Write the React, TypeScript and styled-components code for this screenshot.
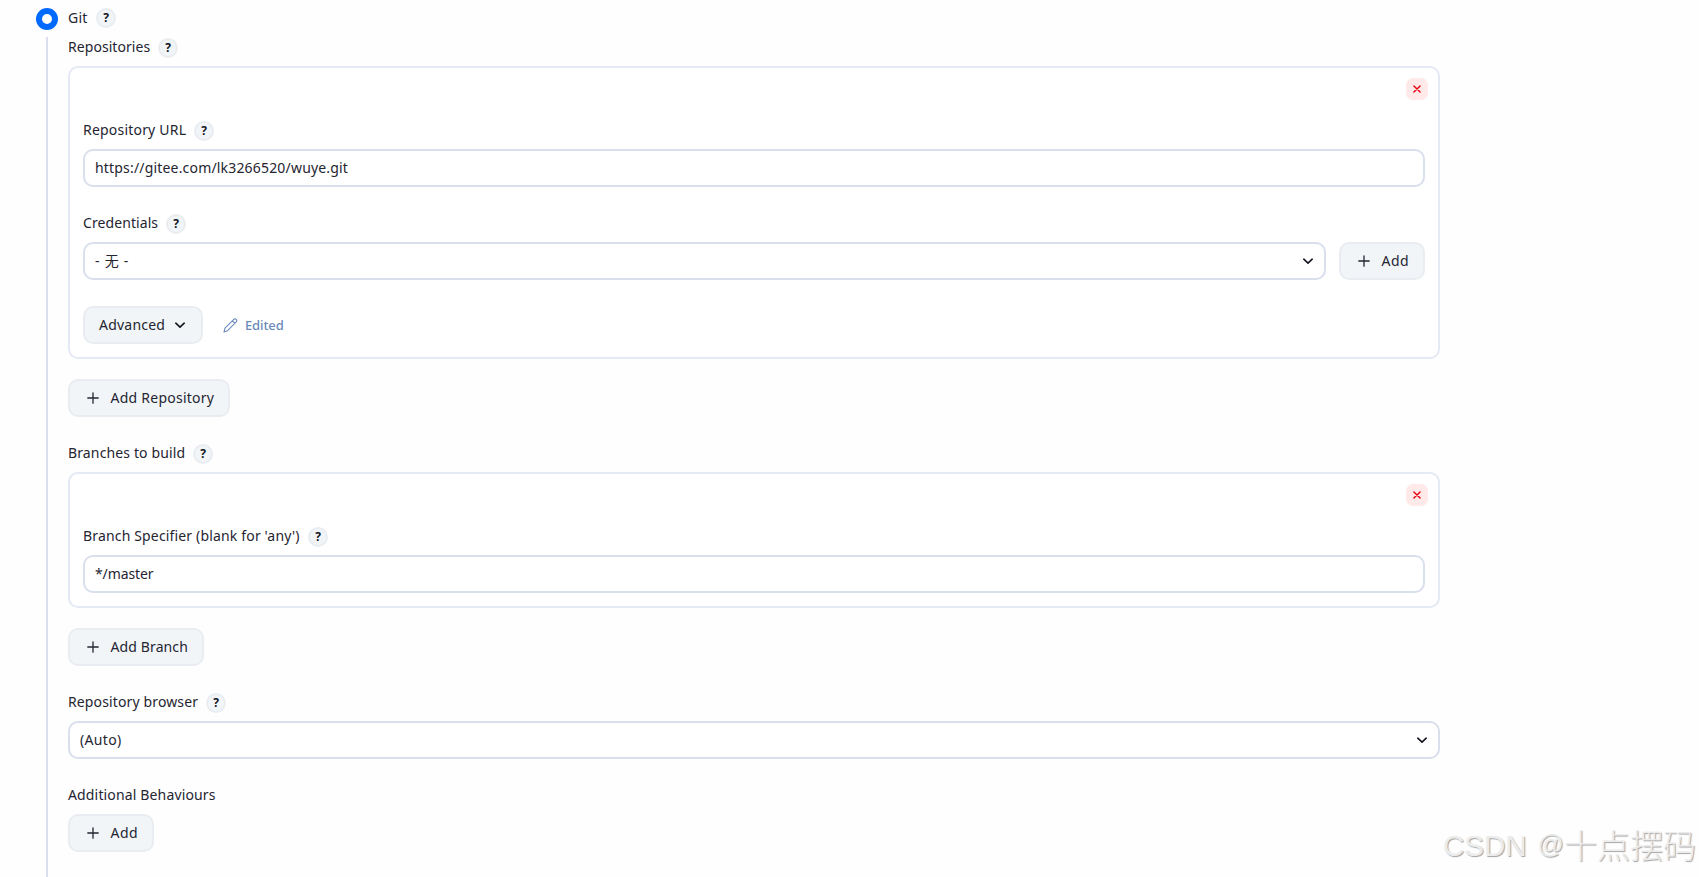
import type { ReactNode } from 'react';
import styled, { createGlobalStyle } from 'styled-components';

const GlobalStyle = createGlobalStyle`
  * {
    box-sizing: border-box;
  }

  body {
    margin: 0;
    background: #fefefe;
    color: #252531;
    font-family: 'Noto Sans', 'Noto Sans CJK SC', sans-serif;
    font-size: 14px;
    overflow: hidden;
  }
`;

const Page = styled.main`
  position: relative;
  display: flex;
  gap: 10px;
  height: 877px;
  padding: 8px 0 0 36px;
  overflow: hidden;
`;

const Rail = styled.div`
  display: flex;
  flex-direction: column;
  align-items: center;
  gap: 7px;
  width: 22px;
`;

const Radio = styled.span`
  flex: none;
  width: 22px;
  height: 22px;
  border: 6px solid #006aff;
  border-radius: 50%;
  background: #fff;
`;

const RailLine = styled.span`
  flex: 1;
  width: 2px;
  background: #d9dfed;
`;

const Form = styled.div`
  width: 1372px;
`;

const LabelRow = styled.div<{ $top?: number }>`
  display: flex;
  align-items: center;
  height: 20px;
  margin-top: ${({ $top = 0 }) => $top}px;
`;

const LabelText = styled.span<{ $width: number; $spacing?: number; $lift?: number }>`
  width: ${({ $width }) => $width}px;
  padding-bottom: ${({ $lift = 2 }) => $lift}px;
  line-height: 20px;
  white-space: nowrap;
  letter-spacing: ${({ $spacing = 0 }) => $spacing}px;
`;

const HelpButton = styled.button`
  display: flex;
  align-items: center;
  justify-content: center;
  width: 20px;
  height: 20px;
  margin: 0 0 0 8px;
  padding: 0 0 1px;
  border: 2px solid #e9edf1;
  border-radius: 50%;
  background: #f1f5f8;
  color: #14141f;
  font: 700 12px 'Noto Sans', sans-serif;
`;

const Card = styled.section`
  display: flex;
  flex-direction: column;
  margin-top: 8px;
  padding: 10px 13px 13px;
  border: 2px solid #e4e9f3;
  border-radius: 10px;
  background: #fff;
`;

const RemoveButton = styled.button`
  display: flex;
  align-items: center;
  justify-content: center;
  align-self: flex-end;
  width: 22px;
  height: 22px;
  margin: 0 -3px 1px 0;
  padding: 0;
  border: 0;
  border-radius: 7px;
  background: #ffe9e9;
  color: #e6000f;
`;

const Field = styled.div<{ $spacing?: number }>`
  display: flex;
  flex: 1;
  align-items: center;
  justify-content: space-between;
  height: 38px;
  padding: 0 10px 2px;
  border: 2px solid #d9dfed;
  border-radius: 10px;
  background: #fff;
  letter-spacing: ${({ $spacing = 0 }) => $spacing}px;

  svg {
    margin-top: 2px;
  }
`;

const FieldRow = styled.div`
  display: flex;
  gap: 13px;
  margin-top: 8px;
`;

const Button = styled.button<{ $width: number; $spacing?: number }>`
  display: flex;
  align-items: center;
  width: ${({ $width }) => $width}px;
  height: 38px;
  padding: 0 0 1px 14px;
  border: 2px solid #e9edf1;
  border-radius: 10px;
  background: #f1f5f8;
  color: #252531;
  font: inherit;
  letter-spacing: ${({ $spacing = 0 }) => $spacing}px;
  white-space: nowrap;
`;

const ButtonText = styled.span`
  margin-left: 8.5px;
`;

const AdvancedText = styled.span`
  width: 75px;
  text-align: left;
`;

const ButtonRow = styled.div<{ $top: number }>`
  display: flex;
  align-items: center;
  margin-top: ${({ $top }) => $top}px;
`;

const Edited = styled.span`
  display: flex;
  align-items: center;
  gap: 7px;
  margin-left: 20px;
  color: #6c8cba;
  font-size: 13px;
  font-weight: 500;
  letter-spacing: -0.12px;
`;

const Watermark = styled.div`
  position: absolute;
  right: 3px;
  bottom: 9px;
  display: flex;
  align-items: center;
  gap: 11px;
  color: #ececec;
  font: 29.5px/44px 'Liberation Sans', 'Noto Sans CJK SC', sans-serif;
  text-shadow: 1px 1px 1px #a3a3a3;
  white-space: nowrap;
`;

const WatermarkBrand = styled.span`
  padding-top: 4px;
`;

const WatermarkName = styled.span`
  display: flex;
  align-items: center;
  font-size: 26px;
`;

const WatermarkCjk = styled.span`
  font: 300 33px/44px 'Noto Sans CJK SC', sans-serif;
`;

const PlusIcon = () => (
  <svg width="18" height="18" viewBox="0 0 18 18" fill="none" stroke="currentColor" strokeWidth="1.3" strokeLinecap="round">
    <path d="M9 3.8v10.4M3.8 9h10.4" />
  </svg>
);

const ChevronIcon = () => (
  <svg width="12" height="12" viewBox="0 0 12 12" fill="none" stroke="#14141f" strokeWidth="1.6" strokeLinecap="round" strokeLinejoin="round">
    <path d="M1.8 4.2 6 8.2l4.2-4" />
  </svg>
);

const CloseIcon = () => (
  <svg width="22" height="22" viewBox="0 0 22 22" fill="none" stroke="currentColor" strokeWidth="1.4" strokeLinecap="round">
    <path d="m7.9 7.9 6.2 6.2M14.1 7.9l-6.2 6.2" />
  </svg>
);

const PencilIcon = () => (
  <svg width="15" height="15" viewBox="0 0 15 15" fill="none" stroke="currentColor" strokeWidth="1.1" strokeLinejoin="round">
    <path d="M1 14l1-3.9L10.8 1.4a1.65 1.65 0 0 1 2.4 0 1.7 1.7 0 0 1 0 2.4L4.6 12.7 1 14ZM9.4 2.8l2.5 2.5" />
  </svg>
);

interface LabelProps {
  children: ReactNode;
  width: number;
  spacing?: number;
  lift?: number;
  top?: number;
  help?: boolean;
}

const Label = ({ children, width, spacing, lift, top, help = true }: LabelProps) => (
  <LabelRow $top={top}>
    <LabelText $width={width} $spacing={spacing} $lift={lift}>{children}</LabelText>
    {help && <HelpButton>?</HelpButton>}
  </LabelRow>
);

interface AddButtonProps {
  children: ReactNode;
  width: number;
  spacing?: number;
}

const AddButton = ({ children, width, spacing = 0.2 }: AddButtonProps) => (
  <Button $width={width} $spacing={spacing}>
    <PlusIcon />
    <ButtonText>{children}</ButtonText>
  </Button>
);

const App = () => {
  return (
    <>
      <GlobalStyle />
      <Page>
        <Rail>
          <Radio />
          <RailLine />
        </Rail>
        <Form>
          <Label width={20} spacing={0.2} lift={0}>Git</Label>
          <Label width={82} spacing={0.06} top={10}>Repositories</Label>
          <Card>
            <RemoveButton><CloseIcon /></RemoveButton>
            <Label width={103} spacing={0.2} top={20}>Repository URL</Label>
            <FieldRow>
              <Field $spacing={0.18}>https://gitee.com/lk3266520/wuye.git</Field>
            </FieldRow>
            <Label width={75} spacing={0.08} top={27}>Credentials</Label>
            <FieldRow>
              <Field $spacing={0.75}>- 无 -<ChevronIcon /></Field>
              <AddButton width={86} spacing={0.5}>Add</AddButton>
            </FieldRow>
            <ButtonRow $top={26}>
              <Button $width={120} $spacing={0.22}>
                <AdvancedText>Advanced</AdvancedText>
                <ChevronIcon />
              </Button>
              <Edited><PencilIcon />Edited</Edited>
            </ButtonRow>
          </Card>
          <ButtonRow $top={20}>
            <AddButton width={162} spacing={0.25}>Add Repository</AddButton>
          </ButtonRow>
          <Label width={117} spacing={0.13} top={27}>Branches to build</Label>
          <Card>
            <RemoveButton><CloseIcon /></RemoveButton>
            <Label width={217} spacing={0.16} top={20}>Branch Specifier (blank for 'any')</Label>
            <FieldRow>
              <Field $spacing={-0.1}>*/master</Field>
            </FieldRow>
          </Card>
          <ButtonRow $top={20}>
            <AddButton width={136} spacing={0.12}>Add Branch</AddButton>
          </ButtonRow>
          <Label width={130} spacing={0.13} top={27}>Repository browser</Label>
          <FieldRow>
            <Field $spacing={0.35}>(Auto)<ChevronIcon /></Field>
          </FieldRow>
          <Label width={150} spacing={0.15} top={27} help={false}>Additional Behaviours</Label>
          <ButtonRow $top={8}>
            <AddButton width={86} spacing={0.5}>Add</AddButton>
          </ButtonRow>
        </Form>
        <Watermark>
          <WatermarkBrand>CSDN</WatermarkBrand>
          <WatermarkName>@<WatermarkCjk>十点摆码</WatermarkCjk></WatermarkName>
        </Watermark>
      </Page>
    </>
  );
};

export default App;
